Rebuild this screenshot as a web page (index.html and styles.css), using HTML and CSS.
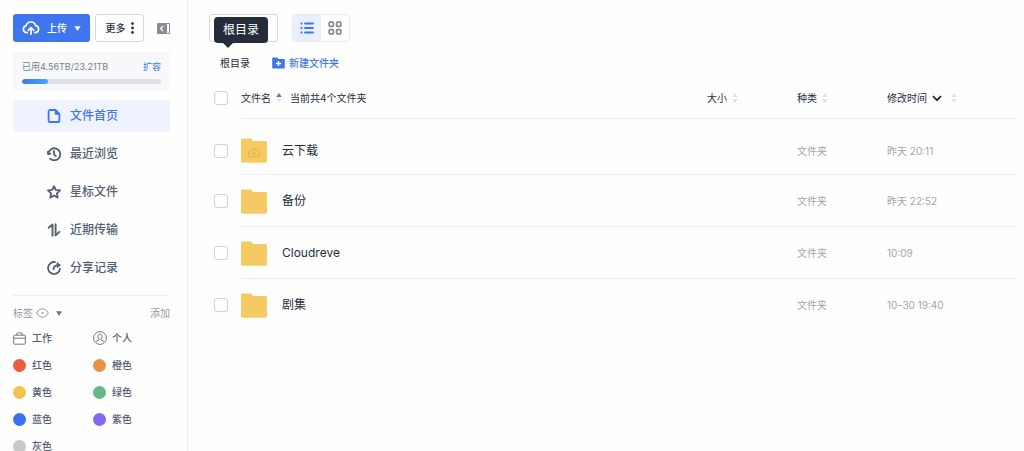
FILE: index.html
```html
<!DOCTYPE html>
<html lang="zh-CN">
<head>
  <meta charset="UTF-8">
  <meta name="viewport" content="width=device-width, initial-scale=1.0">
  <title>文件首页</title>
  <link rel="stylesheet" href="styles.css">
</head>
<body>
  <div class="layout">
    <aside class="sidebar">
      <div class="actions">
        <button type="button" class="btn-upload">
          <svg width="18" height="16" viewBox="0 0 18 16" fill="none" stroke="currentColor" stroke-width="1.7" stroke-linecap="round" stroke-linejoin="round"><path d="M5.2 12.6H4.4A3.4 3.4 0 0 1 4 5.9a5 5 0 0 1 9.7-.2 3.5 3.5 0 0 1-.1 6.9h-.8"/><path d="M9 14.2V7.8M6.2 10.3 9 7.6l2.8 2.7"/></svg>
          <span>上传</span>
          <svg width="7" height="5" viewBox="0 0 7 5"><path d="M.4.2h6.2L3.5 4.9z" fill="currentColor"/></svg>
        </button>
        <button type="button" class="btn-more">
          <span>更多</span>
          <svg width="3" height="12" viewBox="0 0 3 12" fill="currentColor"><circle cx="1.5" cy="1.6" r="1.4"/><circle cx="1.5" cy="6" r="1.4"/><circle cx="1.5" cy="10.4" r="1.4"/></svg>
        </button>
        <button type="button" class="btn-fold" aria-label="收起">
          <svg width="13" height="11" viewBox="0 0 13 11"><rect width="13" height="11" rx="1" fill="#878c95"/><rect x="10" y="1" width="2" height="9" fill="#fff"/><path d="M6 3 3.6 5.5 6 8" fill="none" stroke="#fff" stroke-width="1.2"/></svg>
        </button>
      </div>

      <div class="storage">
        <div class="storage-text">
          <span>已用4.56TB/23.21TB</span>
          <a href="#">扩容</a>
        </div>
        <div class="storage-bar"><div class="storage-used" style="width: 19%"></div></div>
      </div>

      <nav class="menu">
        <a href="#" class="menu-item active">
          <svg width="14" height="14" viewBox="0 0 14 14" fill="none" stroke="currentColor" stroke-width="1.8" stroke-linejoin="round"><path d="M8.5 1H3.2A1.6 1.6 0 0 0 1.6 2.6v8.8A1.6 1.6 0 0 0 3.2 13h7.6a1.6 1.6 0 0 0 1.6-1.600V5z"/><path d="M8.2 1.200v4h4z" fill="currentColor" stroke-width="1"/></svg>
          <span>文件首页</span>
        </a>
        <a href="#" class="menu-item">
          <svg width="14" height="14" viewBox="0 0 14 14" fill="none" stroke="currentColor" stroke-width="1.8" stroke-linecap="round" stroke-linejoin="round"><path d="M3.100 11.600A6 6 0 1 0 1.300 6.600"/><path d="M.9 4.800 1.200 7.200l2.300-.6"/><path d="M7 4v3.300l1.900 1.900"/></svg>
          <span>最近浏览</span>
        </a>
        <a href="#" class="menu-item">
          <svg width="14" height="14" viewBox="0 0 14 14" fill="none" stroke="currentColor" stroke-width="1.8" stroke-linejoin="round"><path d="m7 1.200 1.700 3.700 4.300.5-3.100 2.900.8 4.300L7 10.500l-3.700 2.100.8-4.300L1 5.400l4.300-.5z"/></svg>
          <span>星标文件</span>
        </a>
        <a href="#" class="menu-item">
          <svg width="14" height="14" viewBox="0 0 14 14" fill="none" stroke="currentColor" stroke-width="1.9" stroke-linecap="round" stroke-linejoin="round"><path d="M1.700 4.800 5.500 1.600v11.200"/><path d="M8.600 1.200v11.200l3.800-3.500"/></svg>
          <span>近期传输</span>
        </a>
        <a href="#" class="menu-item">
          <svg width="14" height="14" viewBox="0 0 14 14" fill="none" stroke="currentColor" stroke-width="1.8" stroke-linecap="round" stroke-linejoin="round"><path d="M8 1.100A6 6 0 1 0 13 7.800"/><path d="M6.500 8.300C6.600 5.600 8.300 4.200 11 4.100"/><path d="m10.400 1.900 3 2.200-2.800 2.300z" fill="currentColor" stroke-width="1"/></svg>
          <span>分享记录</span>
        </a>
      </nav>

      <div class="tags-head">
        <span>标签</span>
        <svg width="13" height="10" viewBox="0 0 13 10" fill="none" stroke="currentColor"><path d="M.7 5C3.200-.5 9.800-.5 12.300 5 9.800 10.500 3.200 10.500.7 5z"/><circle cx="6.5" cy="5" r="1" fill="currentColor" stroke="none"/></svg>
        <svg class="tags-arrow" width="6" height="5" viewBox="0 0 6 5"><path d="M0 .2h6L3 4.900z" fill="#6f7680"/></svg>
        <a href="#">添加</a>
      </div>
      <div class="tags">
        <a href="#" class="tag">
          <svg width="13" height="13" viewBox="0 0 13 13" fill="none" stroke="#6f7680"><rect x=".7" y="3.200" width="11.600" height="9" rx=".8"/><path d="M.7 6.200h11.600M3.700 3.200V1.700c0-.5.300-.8.800-.8h4c.5 0 .8.300.8.800v1.500"/></svg>
          工作
        </a>
        <a href="#" class="tag tag-person">
          <svg width="14" height="14" viewBox="0 0 14 14" fill="none" stroke="#6f7680"><circle cx="7" cy="7" r="6.400"/><path d="M7 3.200c-1.400 0-2 .9-2 2.200 0 1.300.4 2 1 2.500v1L3 10.500M7 3.200c1.400 0 2 .9 2 2.200 0 1.300-.4 2-1 2.500v1l3 1.600"/></svg>
          个人
        </a>
        <a href="#" class="tag"><i class="dot red"></i>红色</a>
        <a href="#" class="tag"><i class="dot orange"></i>橙色</a>
        <a href="#" class="tag"><i class="dot yellow"></i>黄色</a>
        <a href="#" class="tag"><i class="dot green"></i>绿色</a>
        <a href="#" class="tag"><i class="dot blue"></i>蓝色</a>
        <a href="#" class="tag"><i class="dot purple"></i>紫色</a>
        <a href="#" class="tag"><i class="dot gray"></i>灰色</a>
      </div>
    </aside>

    <main class="content">
      <div class="toolbar">
        <button type="button" class="btn-filter" aria-label="筛选">
          <svg width="10" height="10" viewBox="0 0 10 10"><path d="M0 .5h10L6.300 5v4.500L3.700 8V5z" fill="currentColor"/></svg>
        </button>
        <div class="view-switch">
          <button type="button" class="view active" aria-label="列表">
            <svg width="14" height="12" viewBox="0 0 14 12" fill="none" stroke="currentColor" stroke-width="1.8" stroke-linecap="round"><path d="M5 1.500h8M5 6h8M5 10.500h8M1.300 1.500h.4M1.300 6h.4M1.300 10.500h.4"/></svg>
          </button>
          <button type="button" class="view" aria-label="图标">
            <svg width="14" height="14" viewBox="0 0 14 14" fill="none" stroke="currentColor" stroke-width="1.7"><rect x="1.200" y="1.200" width="4.200" height="4.200" rx=".8"/><rect x="8.600" y="1.200" width="4.200" height="4.200" rx=".8"/><rect x="1.200" y="8.600" width="4.200" height="4.200" rx=".8"/><rect x="8.600" y="8.600" width="4.200" height="4.200" rx=".8"/></svg>
          </button>
        </div>
      </div>

      <div class="path">
        <a href="#" class="crumb">根目录<span class="tooltip" role="tooltip">根目录</span></a>
        <button type="button" class="btn-new">
          <svg width="13" height="12" viewBox="0 0 13 12"><path d="M1.200.5h3.900l1.300 1.400h5.400c.6 0 1 .4 1 1v7.600c0 .6-.4 1-1 1H1.200c-.6 0-1-.4-1-1v-9c0-.6.4-1 1-1z" fill="currentColor"/><path d="M6.500 4v5M4 6.500h5" stroke="#fff" stroke-width="1.400"/></svg>
          新建文件夹
        </button>
      </div>

      <table class="files">
        <thead>
          <tr>
            <th class="col-check"><input type="checkbox" aria-label="全选"></th>
            <th>
              <div class="head">文件名
                <svg class="sort" width="6" height="10" viewBox="0 0 6 10"><path d="M3 0l2.700 4H.3z" fill="#3f76f0"/><path d="M3 10 .3 6h5.400z" fill="#e3e5e8"/></svg>
                <span class="count">当前共4个文件夹</span>
              </div>
            </th>
            <th class="col-size">
              <div class="head">大小
                <svg class="sort" width="6" height="10" viewBox="0 0 6 10" fill="#dfe1e4"><path d="M3 0l2.700 4H.3zM3 10 .3 6h5.400z"/></svg>
              </div>
            </th>
            <th class="col-kind">
              <div class="head">种类
                <svg class="sort" width="6" height="10" viewBox="0 0 6 10" fill="#dfe1e4"><path d="M3 0l2.700 4H.3zM3 10 .3 6h5.400z"/></svg>
              </div>
            </th>
            <th class="col-time">
              <div class="head">修改时间
                <svg width="10" height="7" viewBox="0 0 10 7" fill="none" stroke="currentColor" stroke-width="1.800"><path d="m1 1.200 4 4 4-4"/></svg>
                <svg class="sort" width="6" height="10" viewBox="0 0 6 10" fill="#dfe1e4"><path d="M3 0l2.700 4H.3zM3 10 .3 6h5.400z"/></svg>
              </div>
            </th>
          </tr>
        </thead>
        <tbody>
          <tr>
            <td class="col-check"><input type="checkbox" aria-label="云下载"></td>
            <td>
              <div class="file">
                <svg width="26" height="25" viewBox="0 0 26 25"><path d="M1.500.5h8.800l1.800 2.500h12.200c1 0 1.700.7 1.700 1.700V23c0 1-.7 1.700-1.700 1.700H1.700C.7 24.700 0 24 0 23V2C0 1.100.6.500 1.500.500z" fill="#f6ca62"/><path d="M10 18.600H9.500a2.700 2.700 0 0 1-.2-5.300 3.800 3.800 0 0 1 7.300-.2 2.800 2.800 0 0 1-.1 5.500H10M13 11.500v5M11 14.800l2 1.900 2-1.900" fill="none" stroke="#dfb24c"/></svg>
                <a href="#">云下载</a>
              </div>
            </td>
            <td></td>
            <td>文件夹</td>
            <td>昨天 20:11</td>
          </tr>
          <tr>
            <td class="col-check"><input type="checkbox" aria-label="备份"></td>
            <td>
              <div class="file">
                <svg width="26" height="25" viewBox="0 0 26 25"><path d="M1.500.5h8.800l1.800 2.500h12.200c1 0 1.700.7 1.700 1.700V23c0 1-.7 1.700-1.700 1.700H1.700C.7 24.700 0 24 0 23V2C0 1.100.6.500 1.500.500z" fill="#f6ca62"/></svg>
                <a href="#">备份</a>
              </div>
            </td>
            <td></td>
            <td>文件夹</td>
            <td>昨天 22:52</td>
          </tr>
          <tr>
            <td class="col-check"><input type="checkbox" aria-label="Cloudreve"></td>
            <td>
              <div class="file">
                <svg width="26" height="25" viewBox="0 0 26 25"><path d="M1.500.5h8.800l1.800 2.500h12.200c1 0 1.700.7 1.700 1.700V23c0 1-.7 1.700-1.700 1.700H1.700C.7 24.700 0 24 0 23V2C0 1.100.6.500 1.500.500z" fill="#f6ca62"/></svg>
                <a href="#">Cloudreve</a>
              </div>
            </td>
            <td></td>
            <td>文件夹</td>
            <td>10:09</td>
          </tr>
          <tr>
            <td class="col-check"><input type="checkbox" aria-label="剧集"></td>
            <td>
              <div class="file">
                <svg width="26" height="25" viewBox="0 0 26 25"><path d="M1.500.5h8.800l1.800 2.500h12.200c1 0 1.700.7 1.700 1.700V23c0 1-.7 1.700-1.700 1.700H1.700C.7 24.700 0 24 0 23V2C0 1.100.6.500 1.500.500z" fill="#f6ca62"/></svg>
                <a href="#">剧集</a>
              </div>
            </td>
            <td></td>
            <td>文件夹</td>
            <td>10–30 19:40</td>
          </tr>
        </tbody>
      </table>
    </main>
  </div>
</body>
</html>
```
FILE: styles.css
```css
* {
  box-sizing: border-box;
}
body {
  margin: 0;
  font-family: Inter, "Noto Sans CJK SC", sans-serif;
  font-size: 10px;
  line-height: 16px;
  color: #252d3b;
  background-color: #fefefe;
}
a {
  color: inherit;
  text-decoration: none;
}
button {
  padding: 0;
  border: none;
  background: none;
  font: inherit;
  color: inherit;
  cursor: pointer;
}
svg {
  display: block;
  flex-shrink: 0;
}
.layout {
  display: flex;
  height: 100vh;
}

/* sidebar */
.sidebar {
  flex: 0 0 188px;
  padding: 14px 17px 0 13px;
  border-right: 1px solid #eceef0;
  overflow: hidden;
}
.actions {
  display: flex;
  align-items: center;
  gap: 5px;
}
.btn-upload,
.btn-more {
  display: flex;
  align-items: center;
  justify-content: center;
  height: 28px;
  border-radius: 3px;
  font-weight: 500;
}
.btn-upload {
  gap: 7px;
  width: 77px;
  background-color: #3f76f0;
  color: #fff;
}
.btn-more {
  gap: 5px;
  width: 49px;
  border: 1px solid #d5d7db;
  background-color: #fff;
}
.btn-fold {
  margin-left: auto;
}
.storage {
  margin-top: 10px;
  padding: 7px 9px;
  height: 39px;
  border-radius: 3px;
  background-color: #f7f8fa;
}
.storage-text {
  display: flex;
  justify-content: space-between;
  font-size: 9px;
  color: #7b8088;
}
.storage-text a {
  color: #3f76f0;
}
.storage-bar {
  margin-top: 4px;
  height: 5px;
  border-radius: 3px;
  background-color: #dfe1e6;
  overflow: hidden;
}
.storage-used {
  height: 100%;
  border-radius: 3px;
  background: linear-gradient(90deg, #3f76f0, #48a8f5);
}
.menu {
  display: flex;
  flex-direction: column;
  gap: 6px;
  margin-top: 9px;
  padding-bottom: 11px;
  border-bottom: 1px solid #eceef0;
}
.menu-item {
  display: flex;
  align-items: center;
  gap: 9px;
  height: 32px;
  padding-left: 34px;
  border-radius: 3px;
  font-size: 12px;
  font-weight: 500;
  color: #535f72;
}
.menu-item.active {
  background-color: #eff3ff;
  color: #3f76f0;
}
.tags-head {
  display: flex;
  align-items: center;
  gap: 3px;
  padding: 9px 0;
  color: #949aa3;
}
.tags-head a {
  margin-left: auto;
}
.tags-arrow {
  margin-left: 4px;
}
.tags {
  display: grid;
  grid-template-columns: 80px 1fr;
  row-gap: 11px;
}
.tag {
  display: flex;
  align-items: center;
  gap: 6px;
  font-weight: 500;
  color: #535f72;
}
.tag-person {
  gap: 5px;
}
.dot {
  width: 13px;
  height: 13px;
  border-radius: 50%;
}
.red { background-color: #ed5b40; }
.orange { background-color: #ea9142; }
.yellow { background-color: #f5c250; }
.green { background-color: #65b786; }
.blue { background-color: #3b6ff5; }
.purple { background-color: #8468f5; }
.gray { background-color: #c9c9c9; }

/* file list */
.content {
  flex: 1;
  min-width: 0;
  padding: 14px 8px 0 21px;
}
.toolbar {
  display: flex;
  gap: 14px;
}
.btn-filter {
  display: flex;
  align-items: center;
  width: 69px;
  height: 28px;
  padding-left: 12px;
  border: 1px solid #d5d7db;
  border-radius: 3px;
  background-color: #fff;
}
.view-switch {
  display: flex;
  height: 28px;
  border: 1px solid #e9ebee;
  border-radius: 3px;
  overflow: hidden;
}
.view {
  display: flex;
  align-items: center;
  justify-content: center;
  width: 28px;
  color: #85898f;
}
.view.active {
  background-color: #eaeefe;
  color: #3f76f0;
}
.path {
  display: flex;
  gap: 22px;
  padding: 13px 11px 12px;
}
.crumb {
  position: relative;
}
.tooltip {
  position: absolute;
  left: -6px;
  bottom: 28px;
  padding: 5px 9px;
  border-radius: 4px;
  background-color: #252d3b;
  font-size: 12px;
  color: #fff;
  white-space: nowrap;
}
.tooltip::after {
  content: "";
  position: absolute;
  left: 9px;
  top: 100%;
  border: 5px solid transparent;
  border-top-color: #252d3b;
  border-bottom: none;
}
.btn-new {
  display: flex;
  align-items: center;
  gap: 4px;
  font-weight: 500;
  color: #3f76f0;
}
.files {
  width: 100%;
  padding-left: 5px;
  border-spacing: 0;
  table-layout: fixed;
}
.files th,
.files td {
  height: 52px;
  padding: 0;
  border-bottom: 1px solid #eceef0;
  text-align: left;
}
.files th {
  height: 36px;
  padding-bottom: 5px;
  font-weight: 400;
}
.files td {
  padding-top: 1px;
  color: #a2a6ad;
}
.files tr:first-child td {
  height: 56px;
  padding-top: 8px;
}
.files tr:last-child td,
.files th.col-check,
.files td.col-check {
  border-bottom-color: transparent;
}
.col-check {
  width: 27px;
}
.col-size,
.col-kind {
  width: 90px;
}
.col-time {
  width: 129px;
}
.head {
  display: flex;
  align-items: center;
  gap: 5px;
}
.count {
  margin-left: 3px;
}
.col-time .sort {
  margin-left: 4px;
}
.file {
  display: flex;
  align-items: center;
  gap: 15px;
  font-size: 12px;
  color: #252d3b;
}
input[type="checkbox"] {
  display: block;
  appearance: none;
  width: 14px;
  height: 14px;
  margin: 0;
  border: 1px solid #cfd1d5;
  border-radius: 3px;
  background-color: #fff;
}
```
